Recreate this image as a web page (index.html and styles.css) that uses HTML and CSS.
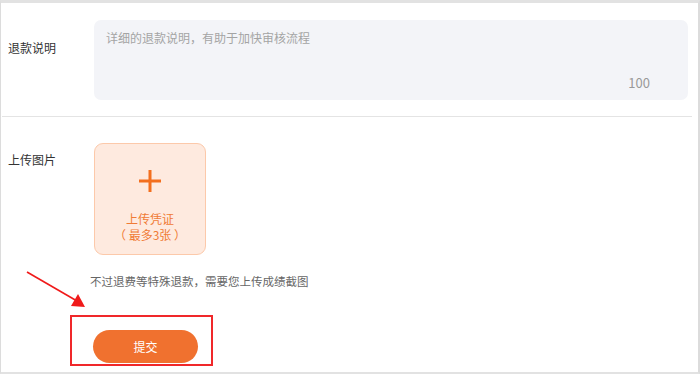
FILE: index.html
```html
<!DOCTYPE html>
<html lang="zh-CN">
<head>
    <meta charset="UTF-8">
    <meta name="viewport" content="width=device-width, initial-scale=1.0">
    <title>申请退款</title>
    <link rel="stylesheet" href="styles.css">
</head>
<body>
    <div class="frame">
        <div class="form-row row-desc">
            <label class="row-label">退款说明</label>
            <div class="textarea-box">
                <div class="placeholder">详细的退款说明，有助于加快审核流程</div>
                <div class="counter">100</div>
            </div>
        </div>

        <div class="divider"></div>

        <div class="form-row row-upload">
            <label class="row-label">上传图片</label>
            <div class="upload-box">
                <svg class="plus" width="24" height="24" viewBox="0 0 24 24">
                    <path d="M12 1V23M1 12H23" stroke="#f36f1e" stroke-width="3" fill="none"/>
                </svg>
                <div class="upload-text">上传凭证</div>
                <div class="upload-text">（ 最多3张 ）</div>
            </div>
        </div>

        <div class="hint">不过退费等特殊退款，需要您上传成绩截图</div>

        <div class="submit-wrap">
            <button class="submit-btn">提交</button>
        </div>

        <svg class="arrow" width="70" height="45" viewBox="0 0 70 45">
            <line x1="2" y1="2" x2="52" y2="31" stroke="#f01a1a" stroke-width="1.6"/>
            <polygon points="60,37 46,36 53,24" fill="#f01a1a"/>
        </svg>
    </div>
</body>
</html>
```

FILE: styles.css
```css
* {
    box-sizing: border-box;
}
body {
    margin: 0;
    font-family: 'Microsoft YaHei', 'Noto Sans CJK SC', sans-serif;
    color: #333;
    background-color: #fff;
}
.frame {
    position: relative;
    width: 700px;
    height: 374px;
    border-top: 3px solid #e2e2e2;
    border-left: 1px solid #dcdcdc;
    border-right: 2px solid #dcdcdc;
    border-bottom: 2px solid #e2e2e2;
    overflow: hidden;
}
.form-row {
    display: flex;
}
.row-label {
    width: 93px;
    padding-left: 7px;
    font-size: 12px;
    line-height: 16px;
    color: #333;
}
.row-desc {
    padding-top: 17px;
}
.row-desc .row-label {
    padding-top: 20px;
}
.textarea-box {
    width: 594px;
    height: 80px;
    background-color: #f3f4f8;
    border-radius: 7px;
    padding: 10px 12px;
    display: flex;
    flex-direction: column;
    justify-content: space-between;
}
.placeholder {
    font-size: 12px;
    line-height: 16px;
    color: #a4a4a4;
}
.counter {
    align-self: flex-end;
    font-size: 13px;
    line-height: 16px;
    color: #999;
    margin-right: 26px;
    margin-bottom: -1px;
}
.divider {
    height: 1px;
    background-color: #e4e4e4;
    margin-top: 16px;
    margin-left: 1px;
    margin-right: 6px;
}
.row-upload {
    padding-top: 26px;
}
.row-upload .row-label {
    padding-top: 9px;
}
.upload-box {
    width: 112px;
    height: 112px;
    background-color: #feeadf;
    border: 1px solid #fcc9aa;
    border-radius: 9px;
    display: flex;
    flex-direction: column;
    align-items: center;
    padding-top: 25px;
}
.plus {
    display: block;
    margin-bottom: 18px;
}
.upload-text {
    font-size: 12px;
    line-height: 16px;
    color: #f07b35;
    text-align: center;
}
.hint {
    margin-top: 18px;
    margin-left: 89px;
    font-size: 11.5px;
    line-height: 16px;
    color: #666;
}
.submit-wrap {
    margin-top: 26px;
    margin-left: 69px;
    width: 143px;
    height: 51px;
    border: 2px solid #f0282a;
    padding-top: 13px;
    padding-left: 21px;
}
.submit-btn {
    display: block;
    width: 105px;
    height: 33px;
    border: none;
    border-radius: 17px;
    background-color: #f0712f;
    color: #fff;
    font-family: 'Microsoft YaHei', 'Noto Sans CJK SC', sans-serif;
    font-size: 12px;
    cursor: pointer;
}
.arrow {
    position: absolute;
    left: 24px;
    top: 267px;
}
```
